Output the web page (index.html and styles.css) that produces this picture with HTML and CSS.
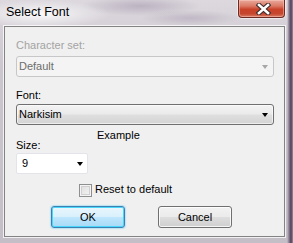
FILE: index.html
```html
<!DOCTYPE html>
<html>
<head>
<meta charset="utf-8">
<title>Select Font</title>
<link rel="stylesheet" href="styles.css">
</head>
<body>
<div class="window">
  <div class="titlebar">
    <span class="title">Select Font</span>
    <span class="close">
      <svg width="15" height="12" viewBox="0 0 15 12">
        <path d="M3 2 L12 10 M12 2 L3 10" stroke="#3d2a2a" stroke-width="4.6" stroke-linecap="square" fill="none"/>
        <path d="M3 2 L12 10 M12 2 L3 10" stroke="#ffffff" stroke-width="2.6" stroke-linecap="square" fill="none"/>
      </svg>
    </span>
  </div>
  <div class="client">
    <div class="label disabled l-charset">Character set:</div>
    <div class="combo combo-disabled c-charset">
      <span class="combo-text">Default</span>
      <span class="arrow arrow-gray"></span>
    </div>
    <div class="label l-font">Font:</div>
    <div class="combo combo-list c-font">
      <span class="combo-text">Narkisim</span>
      <span class="arrow"></span>
    </div>
    <div class="size-row">
      <div class="size-col">
        <div class="label">Size:</div>
        <div class="combo combo-edit">
          <span class="combo-text size-text">9</span>
          <span class="arrow"></span>
        </div>
      </div>
      <div class="example">Example</div>
    </div>
    <div class="check-row">
      <span class="checkbox"></span>
      <span class="check-label">Reset to default</span>
    </div>
    <div class="buttons">
      <div class="btn btn-default">OK</div>
      <div class="btn">Cancel</div>
    </div>
  </div>
</div>
</body>
</html>
```

FILE: styles.css
```css
html, body {
  margin: 0;
  padding: 0;
}
body {
  width: 293px;
  height: 243px;
  overflow: hidden;
  font-family: "Liberation Sans", Arial, sans-serif;
  font-size: 11px;
}
.window {
  width: 293px;
  height: 243px;
  box-sizing: border-box;
  background:
    radial-gradient(ellipse 70px 14px at 40px 14px, rgba(255,255,255,0.85), rgba(255,255,255,0) 100%),
    radial-gradient(ellipse 60px 10px at 140px 6px, rgba(150,135,160,0.45), rgba(150,135,160,0) 100%),
    radial-gradient(ellipse 50px 8px at 190px 18px, rgba(150,135,160,0.35), rgba(150,135,160,0) 100%),
    linear-gradient(to right, rgba(0,0,0,0) 287px, #8c7d90 289px, #4f3d57 291px, #9b8fa0 293px),
    linear-gradient(#dcd8de, #cbc5cd 30%, #c4bec7);
  display: flex;
  flex-direction: column;
}
.titlebar {
  height: 26px;
  display: flex;
  align-items: flex-start;
  justify-content: space-between;
}
.title {
  font-size: 12.5px;
  color: #000;
  padding-left: 6px;
  padding-top: 5px;
  line-height: 15px;
}
.close {
  width: 47px;
  height: 18px;
  margin-right: 8px;
  box-sizing: border-box;
  border: 1px solid #6e2a22;
  border-top: none;
  border-radius: 0 0 4px 4px;
  background: linear-gradient(#e9a99c 0%, #dc7a66 35%, #c9422a 55%, #c6452d 80%, #d77a62 100%);
  box-shadow: inset 0 0 0 1px rgba(255,210,200,0.45), 0 0 0 1px rgba(255,255,255,0.5);
  display: flex;
  align-items: center;
  justify-content: center;
  padding-left: 3px;
}
.close svg {
  display: block;
}
.client {
  margin: 0 8px 0 4px;
  height: 211px;
  box-sizing: border-box;
  background: #f0f0f0;
  border: 1px solid #838383;
  box-shadow: 0 0 0 1px rgba(255,255,255,0.75);
  padding: 11px 10px 0 11px;
  display: flex;
  flex-direction: column;
}
.label {
  line-height: 15px;
  color: #000;
  white-space: nowrap;
}
.disabled {
  color: #a3a3a3;
}
.l-font {
  margin-top: 11px;
}
.combo {
  height: 21px;
  box-sizing: border-box;
  border-radius: 3px;
  display: flex;
  align-items: center;
  justify-content: space-between;
  padding: 0 5px 0 2px;
}
.c-charset {
  margin-top: 3px;
}
.c-font {
  margin-top: 1px;
}
.combo-text {
  line-height: 15px;
}
.combo-disabled {
  border: 1px solid #c7c7c7;
  background: #f4f4f4;
  color: #6d6d6d;
}
.combo-list {
  border: 1px solid #707070;
  background: linear-gradient(#f3f3f3 0%, #ebebeb 45%, #dedede 55%, #d4d4d4 100%);
  box-shadow: inset 0 0 0 1px rgba(255,255,255,0.6);
  color: #000;
}
.combo-edit {
  border: 1px solid #e3e4ea;
  background: #fff;
  color: #000;
  border-radius: 2px;
  padding-left: 5px;
  padding-right: 4px;
}
.arrow {
  width: 0;
  height: 0;
  border-left: 3.5px solid transparent;
  border-right: 3.5px solid transparent;
  border-top: 4px solid #000;
  margin-top: 1px;
}
.arrow-gray {
  border-top-color: #a7a7a7;
}
.size-row {
  display: flex;
  margin-top: 3px;
}
.size-col {
  width: 72px;
  padding-top: 10px;
}
.example {
  margin-left: 9px;
  line-height: 15px;
  color: #000;
}
.check-row {
  display: flex;
  align-items: center;
  margin-top: 8px;
  margin-left: 63px;
  height: 15px;
}
.checkbox {
  width: 13px;
  height: 13px;
  box-sizing: border-box;
  border: 1px solid #8e8f8f;
  background: linear-gradient(135deg, #dcdcdc, #f6f6f6);
  box-shadow: inset 0 0 0 1px #f4f4f4, inset 0 0 0 2px #d0d0d0;
  margin-top: 2px;
}
.check-label {
  margin-left: 3px;
  line-height: 15px;
  color: #000;
}
.buttons {
  display: flex;
  margin-top: 9px;
  margin-left: 35px;
  gap: 33px;
}
.btn {
  width: 74px;
  height: 22px;
  box-sizing: border-box;
  border: 1px solid #707070;
  border-radius: 3px;
  background: linear-gradient(#f2f2f2 0%, #ebebeb 48%, #dddddd 52%, #cfcfcf 100%);
  box-shadow: inset 0 0 0 1px rgba(255,255,255,0.8);
  display: flex;
  align-items: center;
  justify-content: center;
  color: #000;
  line-height: 15px;
}
.btn-default {
  border-color: #3c7fb1;
  background: linear-gradient(#eaf6fd 0%, #d9f0fc 48%, #bee6fd 52%, #a7d9f5 100%);
  box-shadow: inset 0 0 0 1px #48d6fb, 0 0 1px 1px rgba(80,200,245,0.35);
}
```
